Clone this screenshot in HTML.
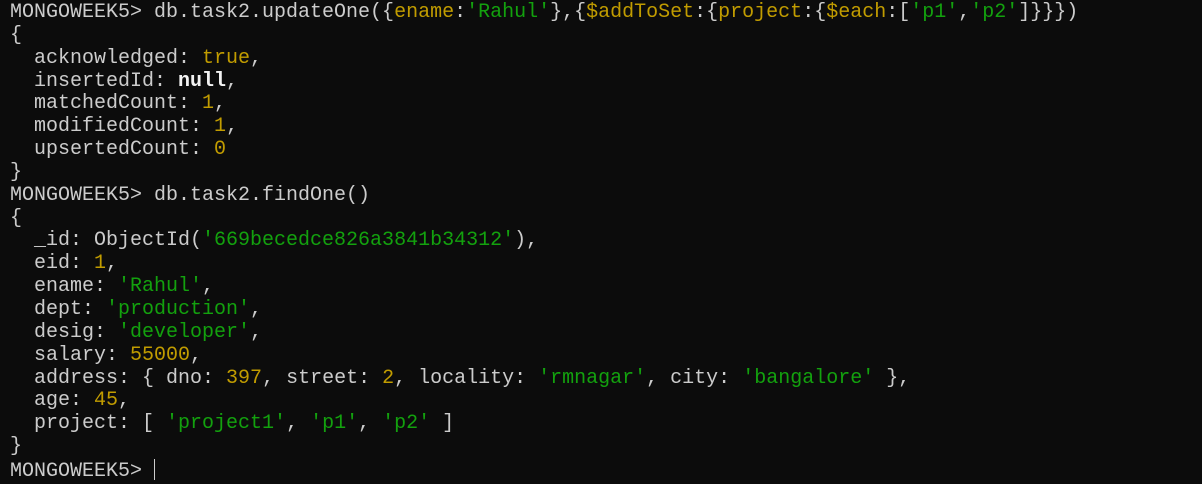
<!DOCTYPE html><html><head><style>
body{margin:0;background:#0c0c0c;width:1202px;height:480px;overflow:hidden}
pre{margin:0;padding:2px 0 0 10px;font-family:"Liberation Mono",monospace;font-size:20px;line-height:22.85px;color:#cccccc}
.y{color:#c19c00}.g{color:#13a10e}.b{color:#f2f2f2;font-weight:bold}
.cur{display:inline-block;width:1px;height:21px;background:#ccc;vertical-align:-4px}
</style></head><body><pre>MONGOWEEK5&gt; db.task2.updateOne({<span class="y">ename</span>:<span class="g">'Rahul'</span>},{<span class="y">$addToSet</span>:{<span class="y">project</span>:{<span class="y">$each</span>:[<span class="g">'p1'</span>,<span class="g">'p2'</span>]}}})
{
  acknowledged: <span class="y">true</span>,
  insertedId: <span class="b">null</span>,
  matchedCount: <span class="y">1</span>,
  modifiedCount: <span class="y">1</span>,
  upsertedCount: <span class="y">0</span>
}
MONGOWEEK5&gt; db.task2.findOne()
{
  _id: ObjectId(<span class="g">'669becedce826a3841b34312'</span>),
  eid: <span class="y">1</span>,
  ename: <span class="g">'Rahul'</span>,
  dept: <span class="g">'production'</span>,
  desig: <span class="g">'developer'</span>,
  salary: <span class="y">55000</span>,
  address: { dno: <span class="y">397</span>, street: <span class="y">2</span>, locality: <span class="g">'rmnagar'</span>, city: <span class="g">'bangalore'</span> },
  age: <span class="y">45</span>,
  project: [ <span class="g">'project1'</span>, <span class="g">'p1'</span>, <span class="g">'p2'</span> ]
}
MONGOWEEK5&gt; <span class="cur"></span></pre></body></html>
